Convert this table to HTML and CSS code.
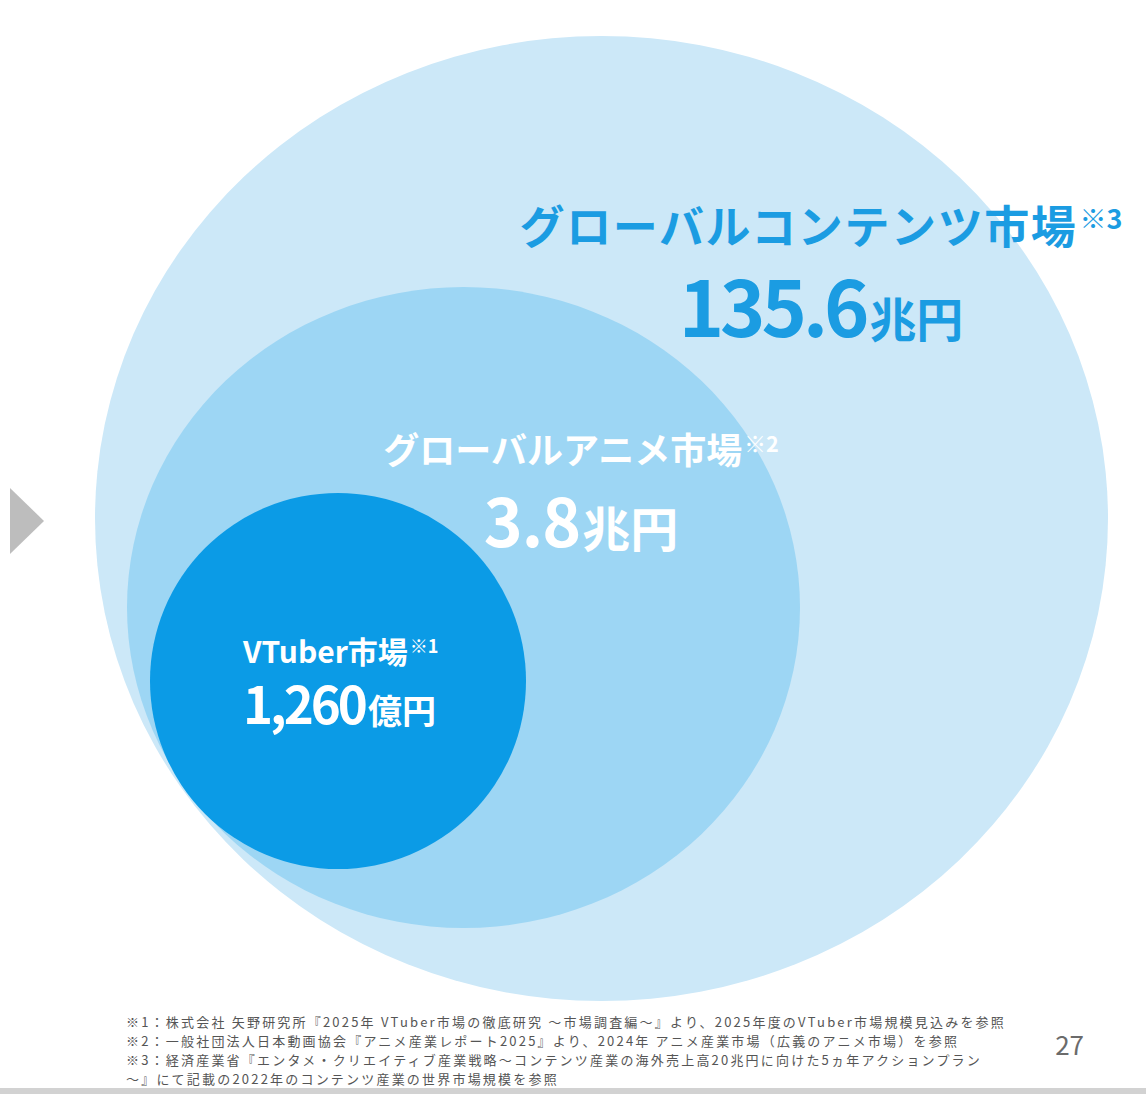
FILE: index.html
```html
<!DOCTYPE html>
<html lang="ja">
<head>
<meta charset="utf-8">
<title>市場規模</title>
<link rel="stylesheet" href="styles.css">
</head>
<body>
<div class="slide">
  <div class="stage">
    <div class="nav-arrow"></div>
    <div class="circle circle-global"></div>
    <div class="circle circle-anime"></div>
    <div class="circle circle-vtuber"></div>

    <div class="label label-global">
      <div class="label-title">グローバルコンテンツ市場<span class="note">※3</span></div>
      <div class="label-value"><span class="num">135.6</span><span class="unit">兆円</span></div>
    </div>

    <div class="label label-anime">
      <div class="label-title">グローバルアニメ市場<span class="note">※2</span></div>
      <div class="label-value"><span class="num">3.8</span><span class="unit">兆円</span></div>
    </div>

    <div class="label label-vtuber">
      <div class="label-title">VTuber市場<span class="note">※1</span></div>
      <div class="label-value"><span class="num">1,260</span><span class="unit">億円</span></div>
    </div>
  </div>

  <footer class="notes">
    <div class="notes-text">
      <p>※1：株式会社 矢野研究所『2025年 VTuber市場の徹底研究 ～市場調査編～』より、2025年度のVTuber市場規模見込みを参照</p>
      <p>※2：一般社団法人日本動画協会『アニメ産業レポート2025』より、2024年 アニメ産業市場（広義のアニメ市場）を参照</p>
      <p>※3：経済産業省『エンタメ・クリエイティブ産業戦略～コンテンツ産業の海外売上高20兆円に向けた5ヵ年アクションプラン</p>
      <p>～』にて記載の2022年のコンテンツ産業の世界市場規模を参照</p>
    </div>
    <div class="page-num">27</div>
  </footer>
  <div class="bottom-bar"></div>
</div>
</body>
</html>
```

FILE: styles.css
```css
html, body {
  margin: 0;
  padding: 0;
  background: #ffffff;
}

body {
  font-family: "Noto Sans CJK JP", "Noto Sans", sans-serif;
}

.slide {
  width: 1146px;
  height: 1094px;
  display: flex;
  flex-direction: column;
  overflow: hidden;
}

.stage {
  position: relative;
  height: 1010px;
  flex: none;
}

.nav-arrow {
  position: absolute;
  left: 10px;
  top: 488px;
  width: 0;
  height: 0;
  border-top: 33px solid transparent;
  border-bottom: 33px solid transparent;
  border-left: 34px solid #bdbdbd;
}

.circle {
  position: absolute;
  border-radius: 50%;
}

.circle-global {
  left: 95px;
  top: 36px;
  width: 1013px;
  height: 965px;
  background: #cce8f8;
}

.circle-anime {
  left: 127px;
  top: 287px;
  width: 673px;
  height: 641px;
  background: #9dd6f4;
}

.circle-vtuber {
  left: 150px;
  top: 493px;
  width: 376px;
  height: 376px;
  background: #0b9be6;
}

.label {
  position: absolute;
  font-weight: 700;
  line-height: 1;
}

.label-title,
.label-value {
  white-space: nowrap;
}

.label .note {
  font-size: 0.6em;
  vertical-align: 0.55em;
  line-height: 0;
  letter-spacing: 0;
  margin-left: 2px;
}

.label-global {
  left: 500px;
  top: 202px;
  width: 642px;
  text-align: center;
  color: #1b9ce2;
}

.label-global .label-title {
  font-size: 45px;
  letter-spacing: 1.6px;
}

.label-global .label-value {
  margin-top: 18px;
}

.label-global .num {
  font-size: 77px;
  letter-spacing: -4px;
}

.label-global .unit {
  font-size: 47px;
  margin-left: 4px;
}

.label-anime {
  left: 361px;
  top: 430px;
  width: 440px;
  text-align: center;
  color: #ffffff;
}

.label-anime .label-title {
  font-size: 36px;
  letter-spacing: 0;
}

.label-anime .label-value {
  margin-top: 19px;
}

.label-anime .num {
  font-size: 66px;
  letter-spacing: -1px;
}

.label-anime .unit {
  font-size: 48px;
  margin-left: 2px;
}

.label-vtuber {
  left: 243px;
  top: 635px;
  color: #ffffff;
}

.label-vtuber .label-title {
  font-size: 30px;
}

.label-vtuber .label-value {
  margin-top: 12px;
}

.label-vtuber .num {
  font-size: 51px;
  letter-spacing: -3px;
}

.label-vtuber .unit {
  font-size: 34px;
  margin-left: 3px;
}

.notes {
  flex: 1;
  display: flex;
  align-items: flex-start;
  padding-left: 126px;
  padding-right: 62px;
  color: #555555;
}

.notes-text {
  padding-top: 2px;
}

.notes-text p {
  margin: 0;
  font-size: 13px;
  line-height: 19px;
  letter-spacing: 2.2px;
  white-space: nowrap;
}

.page-num {
  margin-left: auto;
  margin-top: 18px;
  font-size: 26px;
  line-height: 32px;
  color: #6b6b6b;
  font-weight: 400;
}

.bottom-bar {
  height: 6px;
  flex: none;
  background: #d2d2d2;
}
```
